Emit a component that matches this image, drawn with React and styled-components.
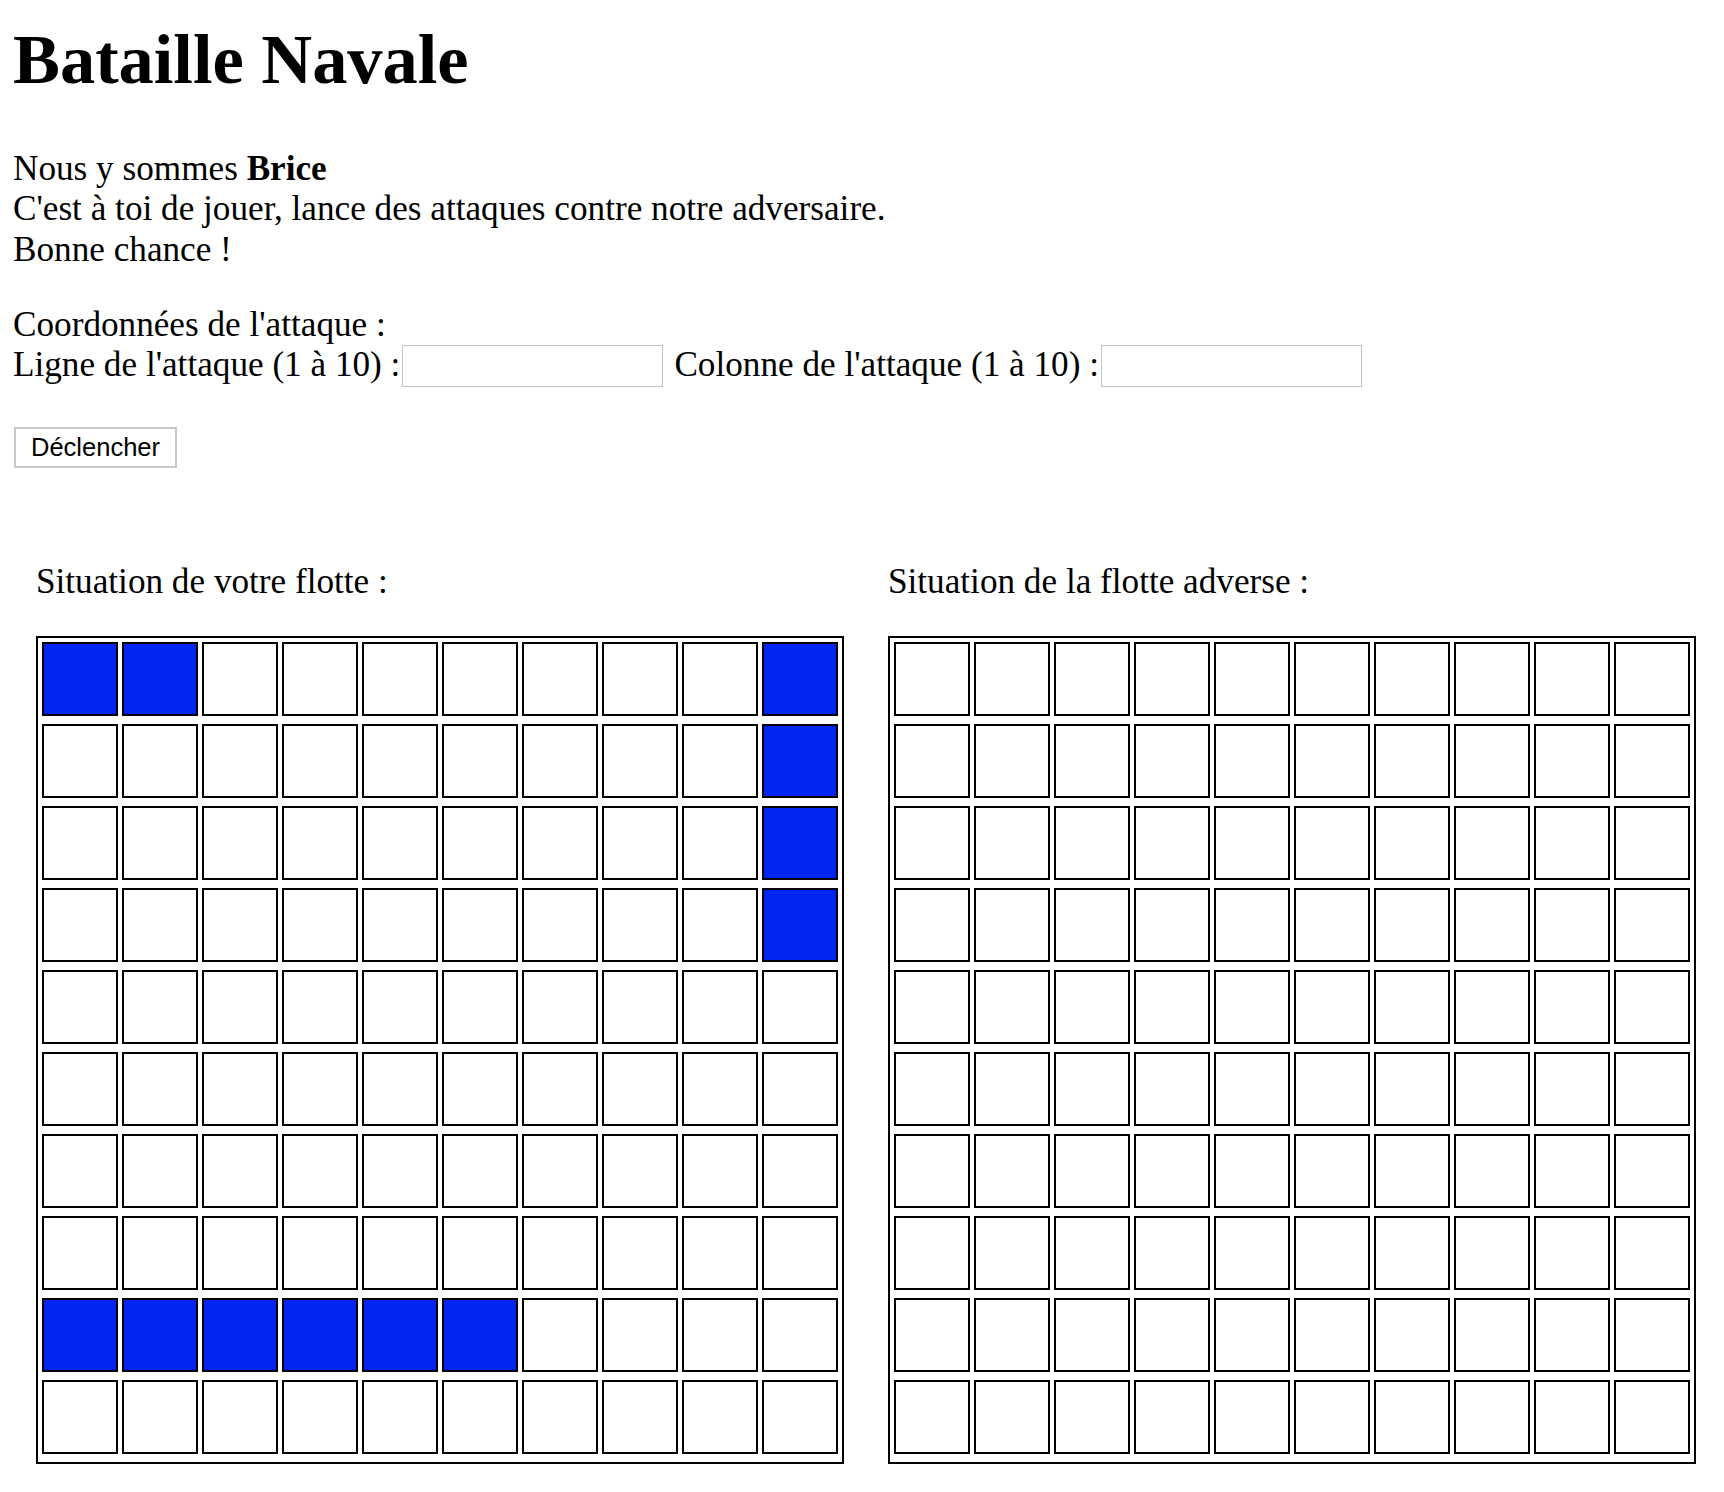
import React from 'react';
import styled, { createGlobalStyle } from 'styled-components';

const GlobalStyle = createGlobalStyle`
  body {
    margin: 0;
    background: #fff;
    color: #000;
    font-family: "Liberation Serif", "Times New Roman", serif;
  }
`;

const Page = styled.div`
  padding: 19px 0 40px 13px;
  font-size: 35.2px;
  line-height: 40.4px;
`;

const Title = styled.h1`
  margin: 0;
  font-size: 70.4px;
  line-height: 81px;
  font-weight: bold;
`;

const Intro = styled.p`
  margin: 49px 0 0;
`;

const AttackForm = styled.form`
  margin: 35px 0 0;
`;

const FieldRow = styled.div`
  display: flex;
  align-items: flex-start;
  margin-top: -1px;
`;

const Label = styled.label`
  margin-left: ${props => props.spaced ? '11px' : '0'};
  white-space: nowrap;
`;

const CoordInput = styled.input`
  box-sizing: border-box;
  width: 261px;
  height: 42px;
  margin: 0 0 0 2px;
  border: 1px solid #c3c3c3;
  background: #fff;
  padding: 0 6px;
  font-size: 24px;
`;

const FireButton = styled.button`
  display: block;
  box-sizing: border-box;
  margin: 40px 0 0 1px;
  width: 163px;
  height: 41px;
  background: #fff;
  border: 2px solid #c8c8c8;
  border-radius: 0;
  padding: 0;
  font-family: "Liberation Sans", Arial, sans-serif;
  font-size: 25.5px;
  color: #000;
`;

const Fleets = styled.div`
  display: flex;
  gap: 44px;
  margin-top: 94px;
  padding-left: 23px;
`;

const Fleet = styled.section`
  display: flex;
  flex-direction: column;
`;

const FleetTitle = styled.h2`
  margin: 0;
  font-size: 35.2px;
  font-weight: normal;
  line-height: 40.4px;
`;

const Board = styled.div`
  margin-top: 34px;
  display: grid;
  grid-template-columns: repeat(10, 76px);
  grid-auto-rows: 74px;
  column-gap: 4px;
  row-gap: 8px;
  padding: 4px 4px 8px;
  border: 2px solid #000;
  width: max-content;
`;

const Cell = styled.div`
  box-sizing: border-box;
  border: 2px solid #000;
  background: ${props => props.ship ? '#0424f2' : '#fff'};
`;

const myShips = [
  [0, 0], [0, 1],
  [0, 9], [1, 9], [2, 9], [3, 9],
  [8, 0], [8, 1], [8, 2], [8, 3], [8, 4], [8, 5],
];

const FleetBoard = ({ ships }) => {
  const taken = new Set(ships.map(([r, c]) => r * 10 + c));
  return (
    <Board>
      {[...Array(100)].map((_, i) => (
        <Cell key={i} ship={taken.has(i)} />
      ))}
    </Board>
  );
};

const App = () => (
  <Page>
    <GlobalStyle />
    <Title>Bataille Navale</Title>
    <Intro>
      Nous y sommes <b>Brice</b><br />
      C'est à toi de jouer, lance des attaques contre notre adversaire.<br />
      Bonne chance !
    </Intro>
    <AttackForm onSubmit={e => e.preventDefault()}>
      <div>Coordonnées de l'attaque :</div>
      <FieldRow>
        <Label htmlFor="ligne">Ligne de l'attaque (1 à 10) :</Label>
        <CoordInput id="ligne" type="text" />
        <Label htmlFor="colonne" spaced>Colonne de l'attaque (1 à 10) :</Label>
        <CoordInput id="colonne" type="text" />
      </FieldRow>
      <FireButton type="submit">Déclencher</FireButton>
    </AttackForm>
    <Fleets>
      <Fleet>
        <FleetTitle>Situation de votre flotte :</FleetTitle>
        <FleetBoard ships={myShips} />
      </Fleet>
      <Fleet>
        <FleetTitle>Situation de la flotte adverse :</FleetTitle>
        <FleetBoard ships={[]} />
      </Fleet>
    </Fleets>
  </Page>
);

export default App;
